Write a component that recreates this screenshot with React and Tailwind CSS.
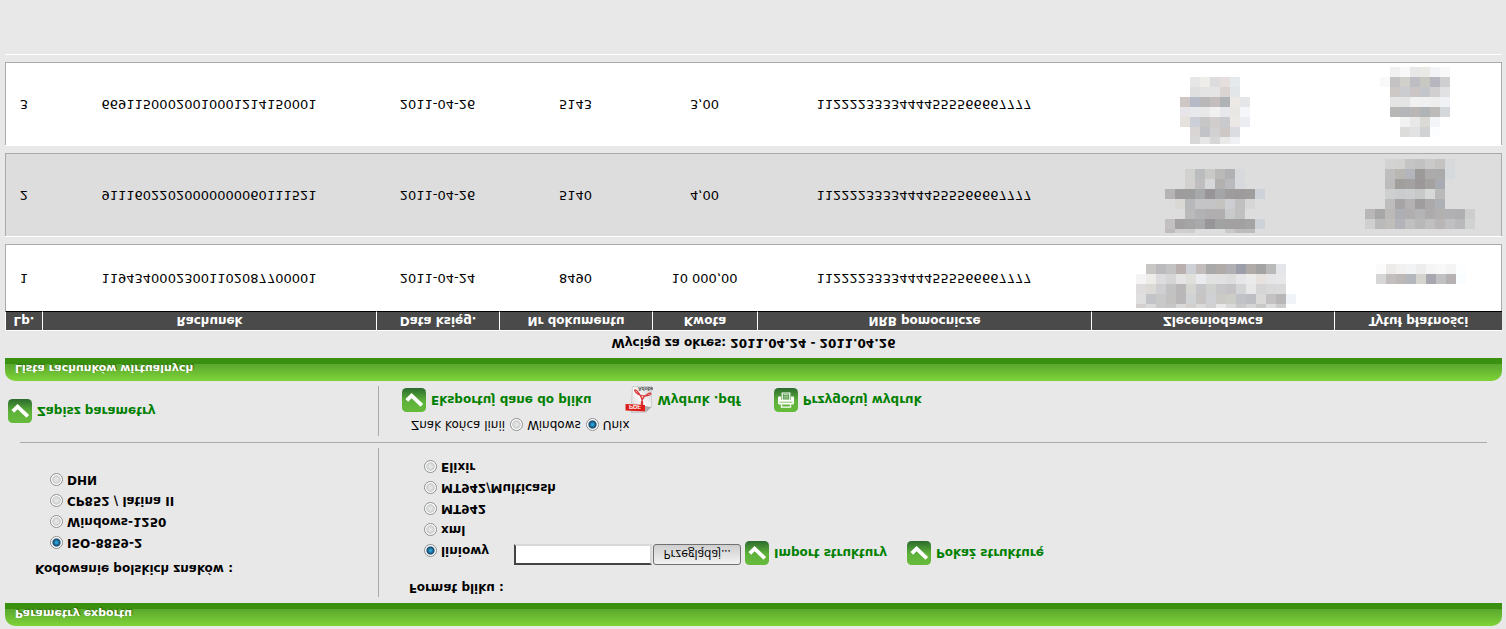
import { useState } from "react";

// ============================================================
// DATA
// ============================================================
const ENCODINGS = ["ISO-8859-2", "Windows-1250", "CP852 / latina II", "DHN"];
const FORMATS = ["liniowy", "xml", "MT942", "MT942/Multicash", "Elixir"];

// Censored cells: x / y is the offset inside the cell, "-" is an empty block
const ROWS = [
  {
    lp: 1,
    account: "11943400023001102087700001",
    date: "2011-04-24",
    doc: "8490",
    amount: "10 000,00",
    nrb: "11222233334444555566667777",
    height: 66,
    sender: {
      x: 13, y: 3, first: 4,
      rows: [
        "d3d0cf dadada c9c9c9 c6c6c6 d9d9d9 d3cfcd dadada d0d0d0 e8e8e8 dadada c9c9c9 d5d5d5 c8c8c6 dddddd cccccc -",
        "e0dfe0 c2c3c6 c9c9c9 c3c2c0 b9b7b8 d0d2d4 c6c5c4 d0d1d4 cccac6 cdcdc8 c0c2c8 bcbec4 dbd9d8 c3c1c2 b9b6b8 f0f4f8",
        "dedcdd dcdad6 cfcfd1 c3c2c2 b9b7b8 d5d5d2 c6c6c9 cfd1cf c7c6c9 c5c3c5 d2d4d5 e7e7e7 d5d5d5 d8d9d8 dadada -",
        "f4f4f4 edece9 dcdcdf d5d5d5 e5e4e5 dfdfdb eaebee e1e1e1 e0e0e0 dddddd e6e6e9 ebebeb e7e2df e5e5e8 e7e7e9 -",
        "- c8c7c6 bbbbbd c3c3c4 b9afaf cdd1d6 c2bdbc a9a9a9 b0aba9 afafb4 9c9fa9 b0aba9 a3a3a3 b9b9b9 e3e5e9 -",
      ],
    },
    title: {
      x: 33, y: 27, first: 10,
      rows: [
        "d6d6d6 c2bebd bcb8b8 b4b7bc d5d4cf a8a7b0 c1c1c4 b6b1b3 fafdff",
        "fbfbfb edebe9 f1f1f1 f2f3f5 ededed f5f5f5 f8f8f8 f4f4f4 fdfeff",
      ],
    },
  },
  {
    lp: 2,
    account: "91116022020000000060111521",
    date: "2011-04-26",
    doc: "5140",
    amount: "4,00",
    nrb: "11222233334444555566667777",
    height: 82,
    sender: {
      x: 42, y: 3, first: 4,
      rows: [
        "c0bcbc cfcfd0 cdcdcd - - - c9c9c9 bcbcbc bcbcbc -",
        "c3c0c1 a2a0a0 a4a5a4 a8a9aa 979598 a1a2a2 a2a0a0 a2a0a0 a4a4a4 cdd1d8",
        "- - bababa b2b2b4 b0aeae b0aeae c7c9cb c1c0c0 - -",
        "- d9d8d3 b7b8ba c4c4c7 c4c4c7 c4c3c0 ccced1 c1c0c0 d6d6d6 -",
        "b5b3b3 9e9c9c 9d9d9d a7a8aa 979598 a4a5a7 9f9d9b 9d9b9b a09e9d cdd1d8",
        "- - d2d1cf c0bdbf d5d7d9 b3b1b0 bab9bd d8d9dc - -",
        "- - d1d1d0 babcbd c9cac7 babab9 b1b0b3 d8d9dc - -",
      ],
    },
    title: {
      x: 22, y: 7, first: 10,
      rows: [
        "cfcfcf bababa bfbebb b4b3ba c0c0c0 b9b8b9 c0c0c0 bab6b8 c0c0c2 b9b9bc d1d3d2",
        "b9b6b8 a7a7a7 bcbab8 adafb4 b0aeaf b4b4b6 aeabac b3b1b0 b1b1b4 afafb2 cdcdcd",
        "- - bdbdbd a6a4a4 b3b1b1 9f9d9d aba9a9 adb0b5 - - -",
        "- - cecfcf cbccce cccdcf c7c8c8 d7d8d8 bababb - - -",
        "- - bcbcbc a19f9c a3a1a1 9c9798 a3a2a0 a8abb1 - - -",
        "- - bebebf b8b7b2 b2b5bb 9c9a98 acaaab abaaaa d3d9dd - -",
        "- - d3d3d3 d2d2d0 c4c4c5 c1c1c1 c9c9ca c4c3c2 d6d8da - -",
      ],
    },
  },
  {
    lp: 3,
    account: "66911500020010001214150001",
    date: "2011-04-26",
    doc: "5143",
    amount: "3,00",
    nrb: "11222233334444555566667777",
    height: 82,
    sender: {
      x: 57, y: 1, first: 7,
      rows: [
        "- d8d8d8 e6e6e6 d7d7d7 e9e9e9 eff0f4 -",
        "- d8d5d4 c2c3c8 d1d1d1 cdc8c5 dbdce1 -",
        "e5e1dd cdcfd8 c6c6c6 d1cdcd c8cacd ebe8e5 ecedf2",
        "e7e5e7 e8e9ed e8e8e9 f1f1f1 e8e8ec e9e7e4 f4f6fa",
        "cfc7c4 b5bac6 b9b7b8 c4bdbd afb3b6 ebe8e6 e4e6e8",
        "- dfdfdf e4e4e4 e4e4e4 d9d4d2 e2e6e9 -",
        "- e6e6e6 efedea dddddd e4dfdd e4e9ec -",
      ],
    },
    title: {
      x: 37, y: 8, first: 10,
      rows: [
        "- - dcdcdb e2e2e2 d1d2d4 fcfdff -",
        "- - f2f2f2 e8e8e8 dad9d5 f4f5f9 -",
        "- b7b7b5 b4b5b8 bab6b5 b0b4b6 bcbbb9 d4d8db",
        "- e4e4e4 e4e4e4 f1f1f1 f0f0f0 eeeeee f0f1f4",
        "- cdc7c6 cbccd0 cbc6c5 c2c5ca d1cfd0 e1e1e4",
        "f9f9f9 c4c2c3 d0cfca bebdc4 c7c8c1 b7b5bd cfced1",
        "- f1f1f1 f8f8f8 e7e7e7 e9e9e6 f2f3f7 f8f8f8",
      ],
    },
  },
];

// ============================================================
// ICONS
// ============================================================
const GreenTile = ({ id, children }) => (
  <svg width="24" height="24" viewBox="0 0 24 24" className="shrink-0" aria-hidden="true">
    <defs>
      <linearGradient id={id} x1="0" y1="0" x2="0" y2="1">
        <stop offset="0" stopColor="#66bb3b" />
        <stop offset="0.45" stopColor="#5fb23a" />
        <stop offset="1" stopColor="#2b6b2d" />
      </linearGradient>
    </defs>
    <rect width="24" height="24" rx="4.5" fill={`url(#${id})`} />
    {children}
  </svg>
);

const CheckIcon = ({ id }) => (
  <GreenTile id={id}>
    <path d="M4.8 11.6 9.6 16.4 19.800 6.600" fill="none" stroke="#fff" strokeWidth="3.800" />
  </GreenTile>
);

const PrintIcon = () => (
  <GreenTile id="tile-print">
    <path d="M7.500 7.500V4.800h9v2.700" fill="none" stroke="#fff" strokeWidth="1.300" />
    <path d="M5.500 7.500h13q1.500 0 1.500 1.500v5.500q0 1-1 1h-2v-3.500h-10v3.500H5q-1 0-1-1V9q0-1.500 1.500-1.500z" fill="#fff" />
    <path d="M5.500 9.800h13" stroke="#62b33d" strokeWidth="0.800" />
    <path d="M8.200 12h7.600v7H8.200z" fill="#478f39" stroke="#fff" strokeWidth="1.200" />
    <path d="M9.500 14h5M9.500 15.800h5M9.500 17.500h5" stroke="#d8ecd2" strokeWidth="0.800" />
  </GreenTile>
);

const PdfIcon = () => (
  <svg width="28" height="27" viewBox="0 0 28 27" className="shrink-0" aria-hidden="true">
    <defs>
      <linearGradient id="pdf-page" x1="0" y1="0" x2="1" y2="1">
        <stop offset="0" stopColor="#c9c9c9" />
        <stop offset="0.5" stopColor="#fafafa" />
        <stop offset="1" stopColor="#cfcfcf" />
      </linearGradient>
    </defs>
    <path d="M6 0.500h14.500l6 5.500V26.500H7.500z" fill="url(#pdf-page)" stroke="#bdbdbd" strokeWidth="0.600" />
    <path d="M20.500 0.500l6 5.500-6.500 1z" fill="#a9a9a9" />
    <path
      d="M16.800 7.500c-1.300 1.500.2 6 1.700 8 2 2.500 6.800 5.500 7.300 4 .5-2-6.300-3-9.800-2-3.500 1-7 4.500-6.200 5.500 1.200 1 4.700-3.500 6.500-7.500 1.400-3.500 1.900-7.500.5-8z"
      fill="none"
      stroke="#d8383a"
      strokeWidth="1.300"
    />
    <path d="M0.500 2.500 20 1.500v6.500L0.500 9z" fill="#dd1f1b" />
    <text x="4" y="8" fontSize="6" fontWeight="bold" fill="#fff" fontFamily="Liberation Sans, sans-serif">PDF</text>
    <text x="13" y="26" fontSize="5" fontWeight="bold" fill="#444" fontFamily="Liberation Sans, sans-serif">Adobe</text>
  </svg>
);

const Mosaic = ({ data, width, height }) => (
  <svg width={width} height={height} className="mx-auto block max-w-none" shapeRendering="crispEdges" aria-hidden="true">
    {data.rows.map((row, r) =>
      row.split(" ").map((color, c) =>
        color === "-" ? null : (
          <rect
            key={`${r}-${c}`}
            x={data.x + c * 10}
            y={r === 0 ? data.y : data.y + data.first + (r - 1) * 10}
            width="10"
            height={r === 0 ? data.first : 10}
            fill={`#${color}`}
          />
        )
      )
    )}
  </svg>
);

// ============================================================
// SMALL PIECES
// ============================================================
const SectionBar = ({ children }) => (
  <h2 className="h-[23px] rounded-t-[10px] border-b-6 border-[#3a9110] bg-linear-to-b from-[#7fd437] to-[#5aa72f] pl-[10px] pt-[3px] text-[11px] leading-5 font-bold text-white text-shadow-[1px_1px_1px_#2c6b10]">
    {children}
  </h2>
);

const Radio = ({ name, label, checked, onChange }) => (
  <label className="flex items-center gap-1 whitespace-nowrap">
    <input
      type="radio"
      name={name}
      checked={checked}
      onChange={onChange}
      className="size-[13px] shrink-0 appearance-none rounded-full border border-[#8e8f8f] bg-radial from-[#e4e4e4] from-20% via-[#c9cbcd] via-50% to-white to-60% checked:from-[#2aa3d8] checked:from-10% checked:via-[#17486a] checked:via-45%"
    />
    {label}
  </label>
);

const ActionLink = ({ icon, children }) => (
  <a href="#" className="flex items-center gap-[5px] font-bold whitespace-nowrap text-[#008000]">
    {icon}
    {children}
  </a>
);

// ============================================================
// PAGE
// ============================================================
const App = () => {
  const [encoding, setEncoding] = useState("ISO-8859-2");
  const [format, setFormat] = useState("liniowy");
  const [lineEnd, setLineEnd] = useState("Unix");

  return (
    <div className="min-h-screen -scale-y-100 bg-[#e8e8e8] px-[5px] pt-[3px] pr-1 font-['DejaVu_Sans',Verdana,sans-serif] text-[12px] leading-4 text-black">
      <SectionBar>Parametry exportu</SectionBar>

      {/* Export parameters */}
      <div className="mt-1.5 flex h-[149px] font-bold">
        <div className="w-[374px] border-r border-[#aaaaaa] pt-5 pl-[30px]">
          <p>Kodowanie polskich znaków :</p>
          <div className="mt-[10px] flex flex-col gap-[5px] pl-[15px]">
            {ENCODINGS.map((item) => (
              <Radio key={item} name="encoding" label={item} checked={encoding === item} onChange={() => setEncoding(item)} />
            ))}
          </div>
        </div>

        <div className="flex-1 pt-px pl-[30px]">
          <p>Format pliku :</p>
          <div className="mt-[15px] flex pl-[15px]">
            <div className="flex w-[90px] flex-col gap-[5px] pt-1.5">
              {FORMATS.map((item) => (
                <Radio key={item} name="format" label={item} checked={format === item} onChange={() => setFormat(item)} />
              ))}
            </div>
            <div className="flex h-6 items-start">
              <input
                type="text"
                readOnly
                aria-label="Plik struktury"
                className="h-[21px] w-[138px] border-2 border-t-[#444444] border-l-[#444444] border-r-[#d8d8d8] border-b-[#d8d8d8] bg-white"
              />
              <button
                type="button"
                className="ml-px h-[21px] w-[88px] rounded-[3px] border border-[#707070] bg-linear-to-b from-[#f2f2f2] to-[#cfcfcf] font-['Open_Sans',sans-serif] text-[12px] leading-4 font-normal"
              >
                Przeglądaj...
              </button>
              <div className="ml-1 flex gap-5">
                <ActionLink icon={<CheckIcon id="tile-import" />}>Import struktury</ActionLink>
                <ActionLink icon={<CheckIcon id="tile-show" />}>Pokaż strukturę</ActionLink>
              </div>
            </div>
          </div>
        </div>
      </div>

      <hr className="mt-[5px] mr-[15px] ml-[15px] border-[#aaaaaa]" />

      {/* Actions */}
      <div className="mt-1.5 flex h-[50px]">
        <div className="flex w-[374px] items-center border-r border-[#aaaaaa] pl-[3px]">
          <ActionLink icon={<CheckIcon id="tile-save" />}>Zapisz parametry</ActionLink>
        </div>
        <div className="pt-[3px] pl-[23px]">
          <div className="flex gap-[5px] pl-[9px]">
            <span>Znak końca linii</span>
            <Radio name="line-end" label="Windows" checked={lineEnd === "Windows"} onChange={() => setLineEnd("Windows")} />
            <Radio name="line-end" label="Unix" checked={lineEnd === "Unix"} onChange={() => setLineEnd("Unix")} />
          </div>
          <div className="mt-[3px] flex h-7 items-center gap-[33px]">
            <ActionLink icon={<CheckIcon id="tile-export" />}>Eksportuj dane do pliku</ActionLink>
            <ActionLink icon={<PdfIcon />}>Wydruk .pdf</ActionLink>
            <ActionLink icon={<PrintIcon />}>Przygotuj wydruk</ActionLink>
          </div>
        </div>
      </div>

      <div className="mt-[5px]">
        <SectionBar>Lista rachunków wirtualnych</SectionBar>
      </div>

      {/* Statement */}
      <table className="w-full table-fixed border-separate border-spacing-0 text-center">
        <caption className="h-[27px] pt-[7px] font-bold">Wyciąg za okres: 2011.04.24 - 2011.04.26</caption>
        <thead>
          <tr className="text-white [&>th]:h-5 [&>th]:border-t [&>th]:border-b [&>th]:border-l [&>th]:border-t-white [&>th]:border-b-black [&>th]:border-l-white [&>th]:bg-[#4a4a4a] [&>th]:p-0">
            <th className="w-[37px]">Lp.</th>
            <th className="w-[334px]">Rachunek</th>
            <th className="w-[123px]">Data księg.</th>
            <th className="w-[153px]">Nr dokumentu</th>
            <th className="w-[105px]">Kwota</th>
            <th className="w-[334px]">NRB pomocnicze</th>
            <th className="w-[243px]">Zleceniodawca</th>
            <th className="w-[168px]">Tytuł płatności</th>
          </tr>
        </thead>
        {ROWS.map((row) => (
          <tbody key={row.lp}>
            <tr className="bg-white text-[13px] data-[lp=2]:bg-[#dddddd] [&>td]:border-b [&>td]:border-[#aaaaaa] [&>td]:p-0 [&>td:first-child]:border-l [&>td:last-child]:border-r" data-lp={row.lp}>
              <td>{row.lp}</td>
              <td>{row.account}</td>
              <td>{row.date}</td>
              <td>{row.doc}</td>
              <td>{row.amount}</td>
              <td>{row.nrb}</td>
              <td><Mosaic data={row.sender} width={180} height={row.height} /></td>
              <td><Mosaic data={row.title} width={150} height={row.height} /></td>
            </tr>
            <tr>
              <td colSpan={8} className="h-2 border-b border-white p-0" />
            </tr>
          </tbody>
        ))}
      </table>
    </div>
  );
};

export default App;
